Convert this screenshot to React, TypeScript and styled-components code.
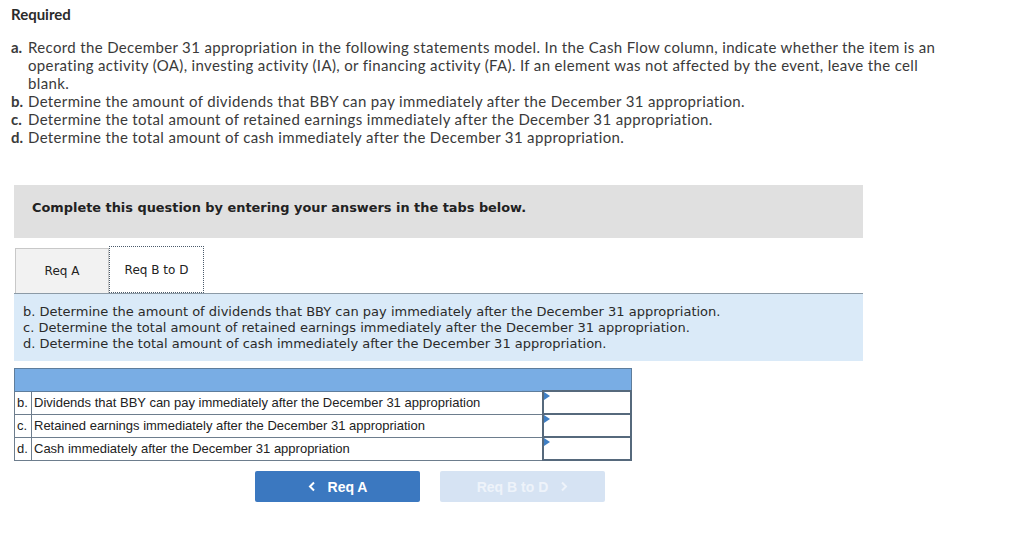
import React from "react";
import styled, { createGlobalStyle } from "styled-components";

const Global = createGlobalStyle`
  html, body { margin: 0; padding: 0; background: #ffffff; }
  body { font-family: "Lato", "Liberation Sans", sans-serif; color: #333333; }
`;

const Page = styled.div`
  padding: 5px 0 0 11px;
  width: 1003px;
`;

const Title = styled.div`
  font-family: "Lato", sans-serif;
  font-weight: 700;
  font-size: 15px;
  line-height: 18px;
  color: #2b2b2b;
`;

const ReqList = styled.ol`
  list-style: none;
  margin: 15px 0 0 0;
  padding: 0;
  width: 940px;
`;

const ReqItem = styled.li`
  display: flex;
  font-size: 15px;
  line-height: 18px;
  letter-spacing: 0.35px;
  color: #3a3a3a;
`;

const ReqLetter = styled.span`
  font-weight: 700;
  flex: 0 0 auto;
  width: 17px;
  letter-spacing: 0;
`;

const ReqText = styled.span`
  flex: 1 1 auto;
`;

const Wrap = styled.div`
  margin: 39px 0 0 3px;
  width: 849px;
`;

const Instruction = styled.div`
  background: #e0e0e0;
  height: 53px;
  box-sizing: border-box;
  display: flex;
  align-items: center;
  padding: 0 0 8px 18px;
  font-family: "DejaVu Sans", Verdana, sans-serif;
  font-weight: 700;
  font-size: 12.9px;
  color: #222222;
`;

const TabBar = styled.div`
  display: flex;
  align-items: flex-end;
  margin-top: 8px;
  height: 47px;
`;

const Tab = styled.div<{ $active?: boolean }>`
  box-sizing: border-box;
  display: flex;
  align-items: center;
  justify-content: center;
  font-family: "DejaVu Sans", Verdana, sans-serif;
  font-size: 12px;
  color: #222222;
  width: ${(p) => (p.$active ? "95px" : "94px")};
  height: ${(p) => (p.$active ? "47px" : "45px")};
  margin-left: ${(p) => (p.$active ? "0" : "1px")};
  background: ${(p) => (p.$active ? "#ffffff" : "#f2f2f2")};
  border: ${(p) => (p.$active ? "1px dotted #4a5a6a" : "1px solid #c8c8c8")};
  border-bottom: ${(p) => (p.$active ? "1px dotted #4a5a6a" : "none")};
`;

const Panel = styled.div`
  background: #daeaf8;
  border-top: 1px solid #8c9aa6;
  padding: 10px 9px 9px 9px;
  font-family: "DejaVu Sans", Verdana, sans-serif;
  font-size: 13px;
  line-height: 16px;
  color: #2a2a2a;
`;

const Table = styled.table`
  margin-top: 7px;
  border-collapse: collapse;
  width: 618px;
  font-family: "Liberation Sans Narrow", "Liberation Sans", sans-serif;
  font-size: 13px;
  color: #222222;
`;

const HeadCell = styled.td`
  background: #79ade4;
  height: 21px;
  border: 1px solid #5e7d9c;
  padding: 0;
`;

const LetterCell = styled.td`
  width: 17px;
  border: 1px solid #6d7d8d;
  padding: 0 0 0 2px;
  height: 22px;
  box-sizing: border-box;
`;

const DescCell = styled.td`
  border: 1px solid #6d7d8d;
  padding: 0 0 0 2px;
  height: 22px;
`;

const InputCell = styled.td`
  position: relative;
  width: 86px;
  border: 2px solid #56697c;
  padding: 0;
  background: #ffffff;
`;

const Marker = styled.span`
  position: absolute;
  top: 0;
  left: 0;
  width: 0;
  height: 0;
  border-top: 4px solid transparent;
  border-bottom: 4px solid transparent;
  border-left: 6px solid #3f7fc4;
`;

const NavRow = styled.div`
  display: flex;
  gap: 20px;
  margin: 10px 0 0 241px;
`;

const NavButton = styled.button<{ $disabled?: boolean }>`
  width: 165px;
  height: 31px;
  border: none;
  border-radius: 2px;
  display: flex;
  align-items: center;
  justify-content: center;
  gap: 12px;
  font-family: "Liberation Sans Narrow", "Liberation Sans", sans-serif;
  font-weight: 700;
  font-size: 14px;
  background: ${(p) => (p.$disabled ? "#d6e3f3" : "#3b78c0")};
  color: ${(p) => (p.$disabled ? "#eef3fa" : "#ffffff")};
  padding: 0;
`;

const Chevron = ({ dir }: { dir: "left" | "right" }) => (
  <svg width="8" height="11" viewBox="0 0 8 11">
    <path
      d={dir === "left" ? "M6 1.5 L2 5.5 L6 9.5" : "M2 1.5 L6 5.5 L2 9.5"}
      fill="none"
      stroke="currentColor"
      strokeWidth="2"
    />
  </svg>
);

const rows = [
  ["b.", "Dividends that BBY can pay immediately after the December 31 appropriation"],
  ["c.", "Retained earnings immediately after the December 31 appropriation"],
  ["d.", "Cash immediately after the December 31 appropriation"],
];

export default function App() {
  return (
    <>
      <Global />
      <Page>
        <Title>Required</Title>
        <ReqList>
          <ReqItem>
            <ReqLetter>a.</ReqLetter>
            <ReqText>
              Record the December 31 appropriation in the following statements model. In the Cash Flow
              column, indicate whether the item is an operating activity (OA), investing activity (IA),
              or financing activity (FA). If an element was not affected by the event, leave the cell
              blank.
            </ReqText>
          </ReqItem>
          <ReqItem>
            <ReqLetter>b.</ReqLetter>
            <ReqText>Determine the amount of dividends that BBY can pay immediately after the December 31 appropriation.</ReqText>
          </ReqItem>
          <ReqItem>
            <ReqLetter>c.</ReqLetter>
            <ReqText>Determine the total amount of retained earnings immediately after the December 31 appropriation.</ReqText>
          </ReqItem>
          <ReqItem>
            <ReqLetter>d.</ReqLetter>
            <ReqText>Determine the total amount of cash immediately after the December 31 appropriation.</ReqText>
          </ReqItem>
        </ReqList>
        <Wrap>
          <Instruction>Complete this question by entering your answers in the tabs below.</Instruction>
          <TabBar>
            <Tab>Req A</Tab>
            <Tab $active>Req B to D</Tab>
          </TabBar>
          <Panel>
            b. Determine the amount of dividends that BBY can pay immediately after the December 31 appropriation.
            <br />
            c. Determine the total amount of retained earnings immediately after the December 31 appropriation.
            <br />
            d. Determine the total amount of cash immediately after the December 31 appropriation.
          </Panel>
          <Table>
            <tbody>
              <tr>
                <HeadCell colSpan={3} />
              </tr>
              {rows.map(([l, d]) => (
                <tr key={l}>
                  <LetterCell>{l}</LetterCell>
                  <DescCell>{d}</DescCell>
                  <InputCell>
                    <Marker />
                  </InputCell>
                </tr>
              ))}
            </tbody>
          </Table>
          <NavRow>
            <NavButton>
              <Chevron dir="left" />
              Req A
            </NavButton>
            <NavButton $disabled>
              Req B to D
              <Chevron dir="right" />
            </NavButton>
          </NavRow>
        </Wrap>
      </Page>
    </>
  );
}
